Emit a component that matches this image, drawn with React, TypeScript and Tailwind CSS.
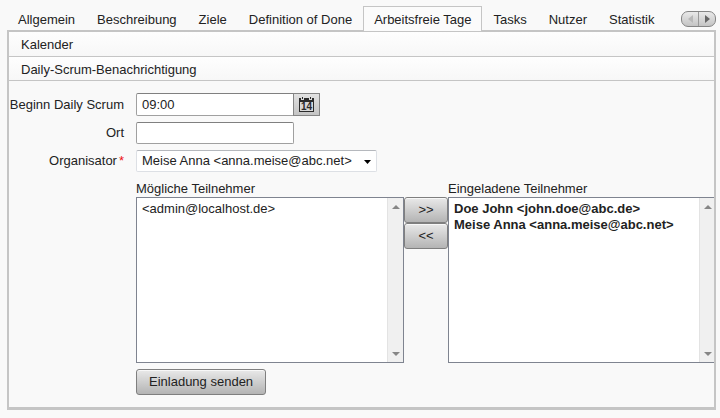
import React from 'react'

const tabs = [
  'Allgemein',
  'Beschreibung',
  'Ziele',
  'Definition of Done',
  'Arbeitsfreie Tage',
  'Tasks',
  'Nutzer',
  'Statistik',
]
const activeTab = 'Arbeitsfreie Tage'

const buttonStyle =
  'h-[26px] shrink-0 rounded-[3px] border border-[#7f7f7f] bg-linear-to-b from-[#e9e9e9] to-[#b4b4b4] shadow-[inset_0_1px_0_#f8f8f8]'

const ScrollTrack: React.FC = () => (
  <div className="flex w-4 shrink-0 flex-col items-center justify-between border-l border-[#e3e3e3] bg-[#f0f0f0] pt-[7px] pb-[6px]">
    <svg width="8" height="4" viewBox="0 0 8 4" aria-hidden="true">
      <path d="M4 0L8 4H0z" fill="#868686" />
    </svg>
    <svg width="8" height="4" viewBox="0 0 8 4" aria-hidden="true">
      <path d="M0 0H8L4 4z" fill="#868686" />
    </svg>
  </div>
)

interface ListBoxProps {
  id: string
  label: string
  options: string[]
  bold?: boolean
}

const ListBox: React.FC<ListBoxProps> = ({ id, label, options, bold }) => (
  <div className="w-[268px] shrink-0">
    <label htmlFor={id} className="block leading-4">
      {label}
    </label>
    <div className="flex h-[166px] border border-[#7f8490] bg-white">
      <select
        id={id}
        multiple
        className="min-w-0 flex-1 appearance-none overflow-hidden bg-white py-[3px] outline-none"
      >
        {options.map((option) => (
          <option key={option} className={`h-4 min-h-4 px-[5px] py-0 leading-4 ${bold ? 'font-bold' : ''}`}>
            {option}
          </option>
        ))}
      </select>
      <ScrollTrack />
    </div>
  </div>
)

const FieldLabel: React.FC<{ htmlFor: string; children: React.ReactNode }> = ({ htmlFor, children }) => (
  <label htmlFor={htmlFor} className="w-[127px] shrink-0 pr-3 text-right whitespace-nowrap">
    {children}
  </label>
)

const TabBar: React.FC = () => (
  <div className="relative">
    <div role="tablist" className="flex overflow-hidden">
      {tabs.map((tab) =>
        tab === activeTab ? (
          <button
            key={tab}
            role="tab"
            aria-selected="true"
            className="h-[26px] shrink-0 border border-[#c5c5c5] bg-[#fbfbfb] px-[10px] pt-[2px]"
          >
            {tab}
          </button>
        ) : (
          <button
            key={tab}
            role="tab"
            aria-selected="false"
            className="h-[26px] shrink-0 border border-transparent px-[10px] pt-[2px]"
          >
            {tab}
          </button>
        ),
      )}
    </div>
    <div className="absolute top-[5px] right-0 flex h-4 w-[35px] overflow-hidden rounded-[7px] border border-[#858585] bg-linear-to-b from-[#e9e9e9] to-[#c4c4c4]">
      <button aria-label="Zurück" className="flex flex-1 items-center justify-center border-r border-[#999999]">
        <svg width="5" height="8" viewBox="0 0 5 8" aria-hidden="true">
          <path d="M5 0V8L0 4z" fill="#b8b8b8" />
        </svg>
      </button>
      <button aria-label="Weiter" className="flex flex-1 items-center justify-center">
        <svg width="5" height="8" viewBox="0 0 5 8" aria-hidden="true">
          <path d="M0 0V8L5 4z" fill="#666666" />
        </svg>
      </button>
    </div>
  </div>
)

const CalendarIcon: React.FC = () => (
  <svg width="15" height="15" viewBox="0 0 15 15" shapeRendering="crispEdges" aria-hidden="true">
    <path d="M0 1H2V3H5V1H10V3H13V1H15V15H0z" fill="#2b2b2b" />
    <path d="M3 0H4V2H3zM11 0H12V2H11z" fill="#2b2b2b" />
    <path d="M1 5H14V14H1z" fill="#d8d8d8" />
    <text
      x="7.500"
      y="13"
      textAnchor="middle"
      className="font-['Liberation_Sans',Arial,sans-serif] text-[10px] font-bold"
      fill="#2b2b2b"
    >
      14
    </text>
  </svg>
)

const sectionStyle =
  'block w-full border-b border-[#c5c5c5] bg-linear-to-b from-[#fefefe] to-[#f7f7f7] pt-[2px] pl-3 text-left'

export default function App() {
  return (
    <main className="min-h-screen bg-[#f9f9f9] pt-[6px] pr-1 pb-2 pl-[7px] font-['Liberation_Sans',Arial,sans-serif] text-[13px] text-[#222222]">
      <TabBar />
      <div className="-mt-[2px] overflow-hidden border-2 border-b-3 border-[#c5c5c5]">
        <button className={`${sectionStyle} h-[25px]`}>Kalender</button>
        <button className={`${sectionStyle} h-6`}>Daily-Scrum-Benachrichtigung</button>

        <form className="flex flex-col gap-[6px] pt-3 pb-3" onSubmit={(e) => e.preventDefault()}>
          <div className="flex items-center">
            <FieldLabel htmlFor="begin">Beginn Daily Scrum</FieldLabel>
            <input
              id="begin"
              type="text"
              defaultValue="09:00"
              className="h-[23px] w-[158px] rounded-l-[2px] border border-[#a0a0a0] border-t-[#808080] bg-white px-[5px] outline-none"
            />
            <button
              type="button"
              aria-label="Uhrzeit wählen"
              className="-ml-px flex h-[23px] w-[27px] items-center justify-center border border-[#858585] bg-linear-to-b from-[#e2e2e2] to-[#c4c4c4]"
            >
              <CalendarIcon />
            </button>
          </div>

          <div className="flex items-center">
            <FieldLabel htmlFor="place">Ort</FieldLabel>
            <input
              id="place"
              type="text"
              className="h-[22px] w-[158px] rounded-[2px] border border-[#a0a0a0] border-t-[#808080] bg-white px-[5px] outline-none"
            />
          </div>

          <div className="flex items-center">
            <FieldLabel htmlFor="organizer">
              Organisator<span className="pl-[2px] text-[#ee1111]">*</span>
            </FieldLabel>
            <div className="relative">
              <select
                id="organizer"
                className="block h-[22px] w-[241px] appearance-none rounded-[2px] border border-[#dde0e5] border-t-[#b5b8bd] bg-white px-[5px] outline-none"
              >
                <option>Meise Anna &lt;anna.meise@abc.net&gt;</option>
              </select>
              <svg
                width="7"
                height="4"
                viewBox="0 0 7 4"
                className="pointer-events-none absolute top-[10px] right-[6px]"
                aria-hidden="true"
              >
                <path d="M0 0H7L3.500 4z" fill="#000000" />
              </svg>
            </div>
          </div>

          <div className="flex pt-[3px] pl-[127px]">
            <ListBox id="available" label="Mögliche Teilnehmer" options={['<admin@localhost.de>']} />
            <div className="flex w-11 shrink-0 flex-col pt-4">
              <button type="button" aria-label="Einladen" className={buttonStyle}>
                &gt;&gt;
              </button>
              <button type="button" aria-label="Entfernen" className={buttonStyle}>
                &lt;&lt;
              </button>
            </div>
            <ListBox
              id="invited"
              label="Eingeladene Teilnehmer"
              options={['Doe John <john.doe@abc.de>', 'Meise Anna <anna.meise@abc.net>']}
              bold
            />
          </div>

          <div className="pl-[127px]">
            <button type="submit" className={`${buttonStyle} px-3`}>
              Einladung senden
            </button>
          </div>
        </form>
      </div>
    </main>
  )
}
